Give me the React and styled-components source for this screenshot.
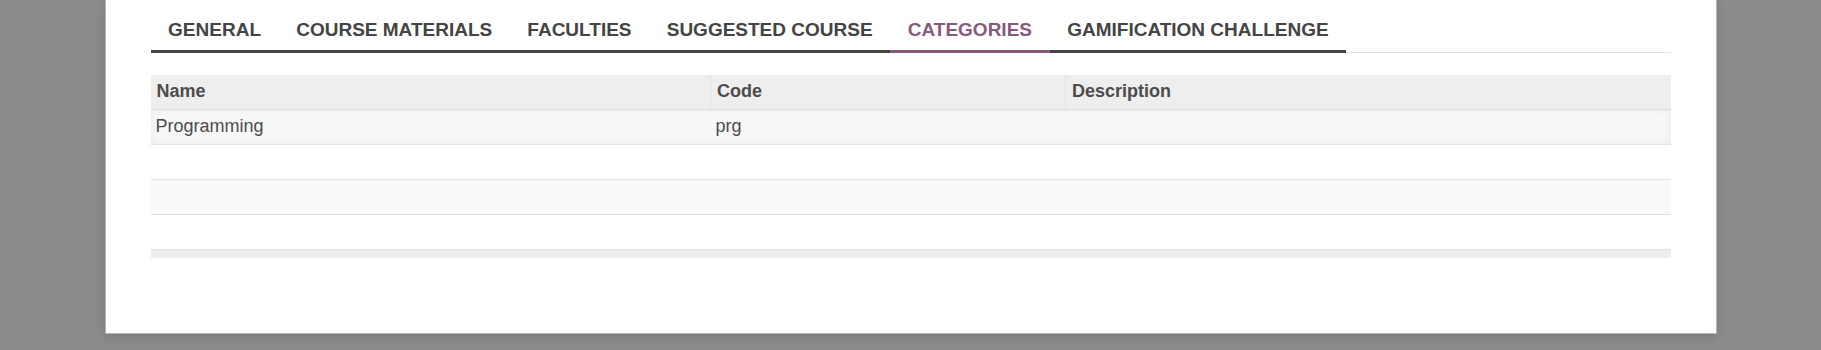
import React from "react";
import styled, { createGlobalStyle } from "styled-components";

const Global = createGlobalStyle`
  html, body { margin: 0; padding: 0; background: #8b8b8b; }
  body { font-family: "Liberation Sans", Arial, sans-serif; color: #4c4c4c; }
  #root { height: 350px; }
`;

const Page = styled.div`
  height: 350px;
  display: flex;
  justify-content: center;
  align-items: flex-start;
`;

const Card = styled.div`
  width: 1612px;
  height: 334px;
  box-sizing: border-box;
  background: #fff;
  border: 1px solid #b4b4bc;
  border-top: none;
  padding: 0 45px;
  box-shadow: 0 3px 10px rgba(0, 0, 0, 0.12);
  display: flex;
  flex-direction: column;
`;

const Tabs = styled.nav`
  display: flex;
  border-bottom: 1px solid #dee2e6;
`;

const Tab = styled.div`
  padding: 18px 17.6px 8px;
  line-height: 24px;
  font-size: 19px;
  font-weight: 700;
  text-transform: uppercase;
  white-space: nowrap;
  color: ${(p) => (p.$active ? "#875a7b" : "#444444")};
  border-bottom: 3px solid ${(p) => (p.$active ? "#875a7b" : "#444444")};
  margin-bottom: -1px;
`;

const Table = styled.table`
  margin-top: 22px;
  width: 100%;
  border-collapse: collapse;
  table-layout: fixed;
  font-size: 18px;
`;

const Th = styled.th`
  height: 34px;
  padding: 0 5px 0 6px;
  text-align: left;
  font-weight: 700;
  color: #4c4c4c;
  background: #eeeeee;
  border-bottom: 1px solid #dcdcdc;
  border-left: ${(p) => (p.$first ? "none" : "1px solid #e2e2e2")};
  box-sizing: border-box;
`;

const Row = styled.tr`
  background: ${(p) => (p.$hover ? "#f7f7f7" : p.$striped ? "#f9f9f9" : "#ffffff")};
  box-shadow: ${(p) =>
    p.$hover ? "inset 0 0 8px rgba(0, 0, 0, 0.06)" : "none"};
`;

const Td = styled.td`
  height: 34px;
  padding: 0 5px;
  color: #4c4c4c;
  border-bottom: 1px solid #dee2e6;
  white-space: nowrap;
`;

const Foot = styled.td`
  height: 8px;
  padding: 0;
  background: #eeeeee;
`;

const tabs = [
  "General",
  "Course Materials",
  "Faculties",
  "Suggested Course",
  "Categories",
  "Gamification Challenge",
];

const rows = [
  { name: "Programming", code: "prg", description: "" },
  { name: "", code: "", description: "" },
  { name: "", code: "", description: "" },
  { name: "", code: "", description: "" },
];

export default function App() {
  return (
    <>
      <Global />
      <Page>
        <Card>
          <Tabs>
            {tabs.map((t) => (
              <Tab key={t} $active={t === "Categories"}>
                {t}
              </Tab>
            ))}
          </Tabs>
          <Table>
            <colgroup>
              <col style={{ width: "560px" }} />
              <col style={{ width: "355px" }} />
              <col />
            </colgroup>
            <thead>
              <tr>
                <Th $first>Name</Th>
                <Th>Code</Th>
                <Th>Description</Th>
              </tr>
            </thead>
            <tbody>
              {rows.map((r, i) => (
                <Row key={i} $striped={i % 2 === 0} $hover={i === 0}>
                  <Td>{r.name}</Td>
                  <Td>{r.code}</Td>
                  <Td>{r.description}</Td>
                </Row>
              ))}
            </tbody>
            <tfoot>
              <tr>
                <Foot colSpan={3} />
              </tr>
            </tfoot>
          </Table>
        </Card>
      </Page>
    </>
  );
}
